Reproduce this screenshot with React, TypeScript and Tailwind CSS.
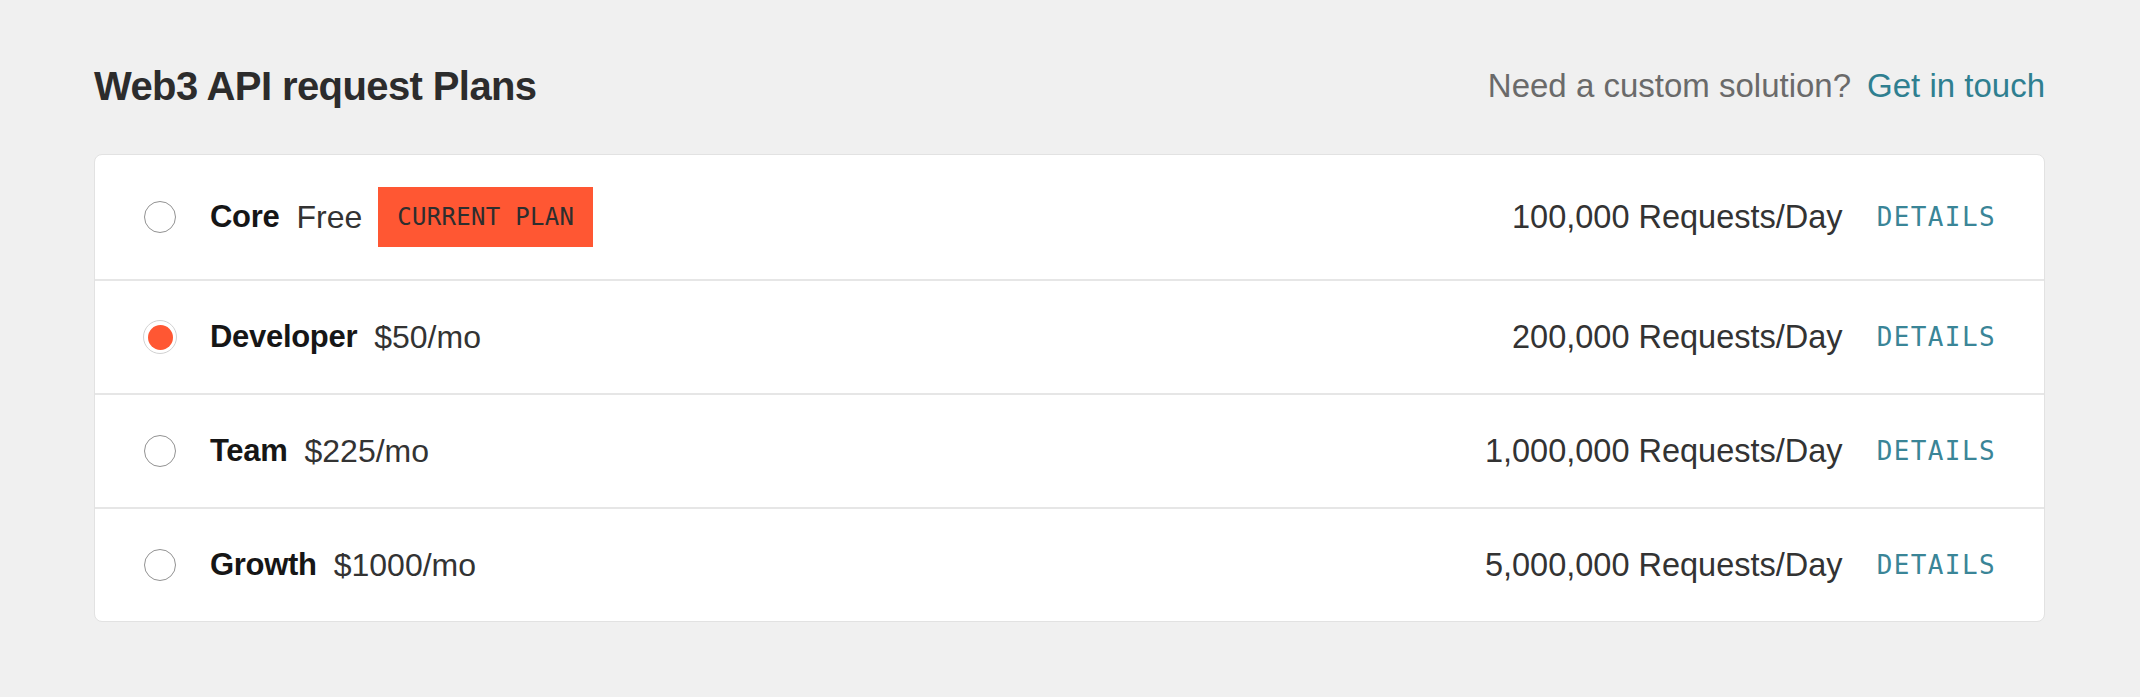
import React from "react";

type Plan = {
  name: string;
  price: string;
  requests: string;
  current?: boolean;
  selected?: boolean;
};

const plans: Plan[] = [
  { name: "Core", price: "Free", requests: "100,000 Requests/Day", current: true },
  { name: "Developer", price: "$50/mo", requests: "200,000 Requests/Day", selected: true },
  { name: "Team", price: "$225/mo", requests: "1,000,000 Requests/Day" },
  { name: "Growth", price: "$1000/mo", requests: "5,000,000 Requests/Day" },
];

function Radio({ selected }: { selected?: boolean }) {
  if (selected) {
    return (
      <span className="flex h-[34px] w-[34px] shrink-0 items-center justify-center rounded-full border-[1.5px] border-[#d2d2d2] bg-white">
        <span className="h-[25px] w-[25px] rounded-full bg-[#ff5733]" />
      </span>
    );
  }
  return (
    <span className="flex h-[34px] w-[34px] shrink-0 items-center justify-center">
      <span className="h-[32px] w-[32px] rounded-full border-[1.5px] border-[#929292] bg-white" />
    </span>
  );
}

export default function App() {
  return (
    <div
      className="min-h-[697px] w-full bg-[#f0f0f0] pl-[94px] pr-[95px] pt-[62px]"
      style={{ fontFamily: '"Liberation Sans", Arial, sans-serif' }}
    >
      <div className="flex items-center justify-between">
        <h1 className="text-[40px] font-bold leading-[48px] tracking-[-0.6px] text-[#2c2c2c]">
          Web3 API request Plans
        </h1>
        <div className="flex items-center text-[33px] leading-[48px]">
          <span className="text-[#6a6a6a]">Need a custom solution?</span>
          <a className="ml-[16px] text-[#2f7f90]">Get in touch</a>
        </div>
      </div>

      <div className="mt-[44px] overflow-hidden rounded-[8px] border-[1.5px] border-[#e2e2e2] bg-white">
        {plans.map((p, i) => (
          <div
            key={p.name}
            className={
              "flex items-center pl-[48px] pr-[48px] py-[32px] " +
              (i > 0 ? "border-t-2 border-[#e6e6e6] " : "") +
              (p.current ? "h-[124px]" : "h-[114px]")
            }
          >
            <Radio selected={p.selected} />
            <span className="ml-[33px] text-[31px] font-bold leading-[48px] tracking-[-0.3px] text-[#161616]">
              {p.name}
            </span>
            <span className="ml-[17px] text-[32px] leading-[48px] text-[#333333]">{p.price}</span>
            {p.current && (
              <span
                className="ml-[16px] flex h-[60px] items-center bg-[#ff5733] px-[19px] text-[24px] tracking-[0.3px] text-[#2e2e2e]"
                style={{ fontFamily: '"DejaVu Sans Mono", "Liberation Mono", monospace' }}
              >
                CURRENT PLAN
              </span>
            )}
            <span className="flex-1" />
            <span className="text-[32.5px] leading-[48px] text-[#333333]">{p.requests}</span>
            <a
              className="ml-[34px] text-[26px] leading-[48px] tracking-[1.4px] text-[#3a8597]"
              style={{ fontFamily: '"DejaVu Sans Mono", "Liberation Mono", monospace' }}
            >
              DETAILS
            </a>
          </div>
        ))}
      </div>
    </div>
  );
}
